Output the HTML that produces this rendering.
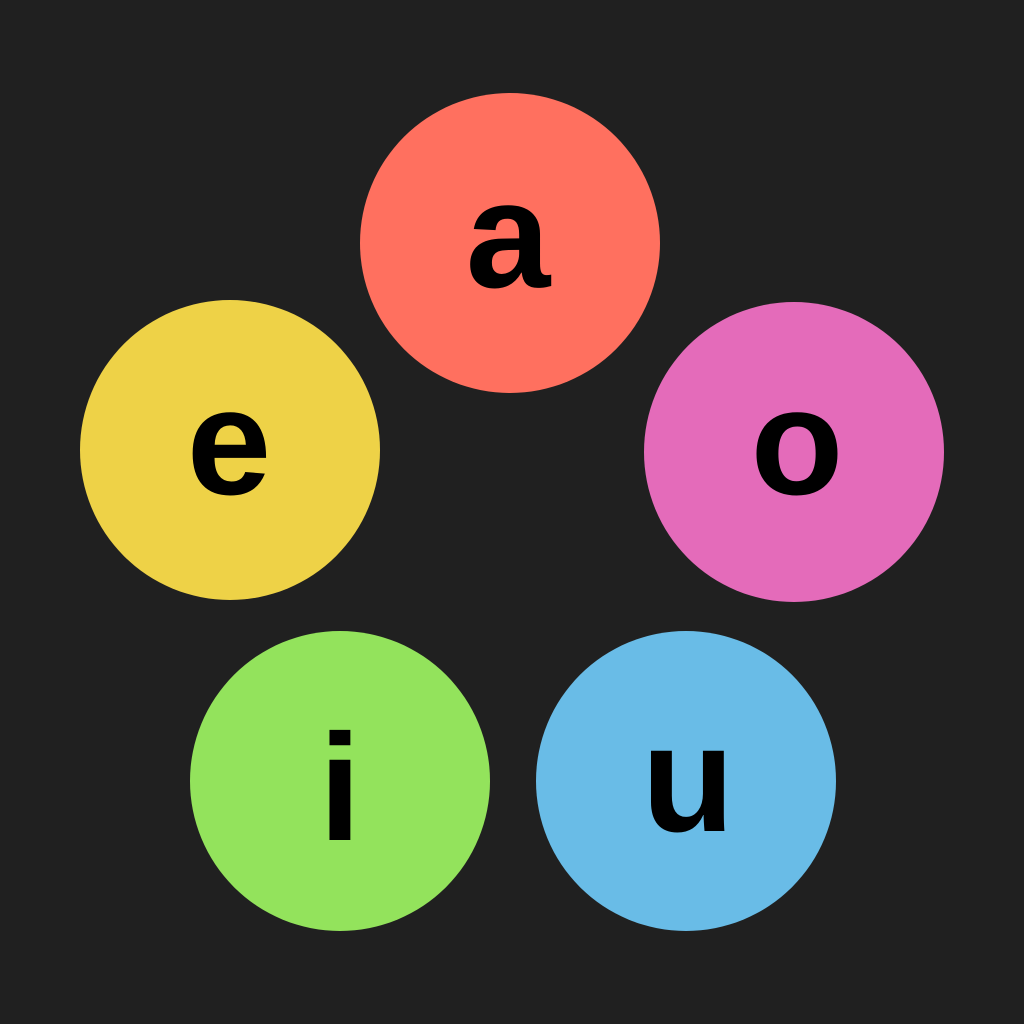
<!DOCTYPE html>
<html><head><style>html,body{margin:0;padding:0;background:#202020;}svg{display:block}</style></head>
<body>
<svg width="1024" height="1024" viewBox="0 0 1024 1024">
<rect width="1024" height="1024" fill="#202020"/>
<circle cx="510" cy="243" r="150" fill="#FF705F"/>
<circle cx="230" cy="450" r="150" fill="#EED247"/>
<circle cx="794" cy="452" r="150" fill="#E46BBA"/>
<circle cx="340" cy="781" r="150" fill="#93E35C"/>
<circle cx="686" cy="781" r="150" fill="#69BCE7"/>
<g font-family="Liberation Sans, sans-serif" font-weight="bold" font-size="152" text-anchor="middle" fill="#000">
<text x="508" y="287">a</text>
<text x="229" y="494">e</text>
<text x="797" y="494">o</text>
<text x="340" y="840">i</text>
<text x="688" y="831">u</text>
</g>
</svg>
</body></html>
